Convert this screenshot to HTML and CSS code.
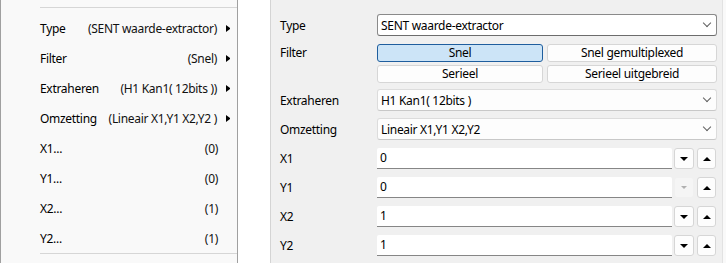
FILE: index.html
```html
<!DOCTYPE html>
<html lang="nl">
<head>
    <meta charset="UTF-8">
    <title>SENT waarde-extractor</title>
    <link rel="stylesheet" href="styles.css">
</head>
<body>
    <div class="menu-panel">
        <div class="menu-sep"></div>
        <div class="menu-row"><span class="menu-label">Type</span><span class="menu-value">(SENT waarde-extractor)</span><span class="menu-arrow"></span></div>
        <div class="menu-row"><span class="menu-label">Filter</span><span class="menu-value">(Snel)</span><span class="menu-arrow"></span></div>
        <div class="menu-row"><span class="menu-label">Extraheren</span><span class="menu-value">(H1 Kan1( 12bits ))</span><span class="menu-arrow"></span></div>
        <div class="menu-row"><span class="menu-label">Omzetting</span><span class="menu-value">(Lineair X1,Y1 X2,Y2 )</span><span class="menu-arrow"></span></div>
        <div class="menu-row"><span class="menu-label">X1...</span><span class="menu-value">(0)</span><span class="menu-noarrow"></span></div>
        <div class="menu-row"><span class="menu-label">Y1...</span><span class="menu-value">(0)</span><span class="menu-noarrow"></span></div>
        <div class="menu-row"><span class="menu-label">X2...</span><span class="menu-value">(1)</span><span class="menu-noarrow"></span></div>
        <div class="menu-row"><span class="menu-label">Y2...</span><span class="menu-value">(1)</span><span class="menu-noarrow"></span></div>
        <div class="menu-sep"></div>
    </div>

    <div class="gutter"></div>

    <div class="form-panel">
        <div class="form-row row-type">
            <span class="form-label">Type</span>
            <div class="combo combo-main"><span>SENT waarde-extractor</span><span class="chevron"></span></div>
        </div>
        <div class="form-row row-filter">
            <span class="form-label">Filter</span>
            <div class="filter-grid">
                <button class="filter-btn selected">Snel</button>
                <button class="filter-btn">Snel gemultiplexed</button>
                <button class="filter-btn">Serieel</button>
                <button class="filter-btn">Serieel uitgebreid</button>
            </div>
        </div>
        <div class="form-row row-extract">
            <span class="form-label">Extraheren</span>
            <div class="combo"><span>H1 Kan1( 12bits )</span><span class="chevron"></span></div>
        </div>
        <div class="form-row row-convert">
            <span class="form-label">Omzetting</span>
            <div class="combo"><span>Lineair X1,Y1 X2,Y2</span><span class="chevron"></span></div>
        </div>
        <div class="form-row row-num">
            <span class="form-label">X1</span>
            <div class="spin"><div class="num-input">0</div><button class="spin-btn"><span class="tri-down"></span></button><button class="spin-btn"><span class="tri-up"></span></button></div>
        </div>
        <div class="form-row row-num">
            <span class="form-label">Y1</span>
            <div class="spin"><div class="num-input">0</div><button class="spin-btn disabled"><span class="tri-down"></span></button><button class="spin-btn"><span class="tri-up"></span></button></div>
        </div>
        <div class="form-row row-num">
            <span class="form-label">X2</span>
            <div class="spin"><div class="num-input">1</div><button class="spin-btn"><span class="tri-down"></span></button><button class="spin-btn"><span class="tri-up"></span></button></div>
        </div>
        <div class="form-row row-num">
            <span class="form-label">Y2</span>
            <div class="spin"><div class="num-input">1</div><button class="spin-btn"><span class="tri-down"></span></button><button class="spin-btn"><span class="tri-up"></span></button></div>
        </div>
    </div>

    <div class="edge"></div>
</body>
</html>
```

FILE: styles.css
```css
body {
    margin: 0;
    padding: 0;
    font-family: "Noto Sans", "Open Sans", sans-serif;
    font-size: 12px;
    letter-spacing: -0.3px;
    color: #000;
    background-color: #ffffff;
    height: 263px;
    display: flex;
    overflow: hidden;
}

/* linker menu */
.menu-panel {
    width: 238px;
    box-sizing: border-box;
    background-color: #f9f9f9;
    border-left: 1px solid #a0a0a0;
    border-right: 1px solid #a0a0a0;
    padding-top: 7px;
    padding-left: 39px;
}

.menu-sep {
    height: 1px;
    background-color: #d6d6d6;
}

.menu-sep:first-child {
    margin-bottom: 5px;
}

.menu-row {
    height: 30px;
    display: flex;
    align-items: center;
}

.menu-label {
    flex: 1;
}

.menu-value {
    color: #111;
}

.menu-arrow,
.menu-noarrow {
    width: 13px;
    height: 7px;
    display: flex;
    justify-content: flex-end;
    padding-right: 7px;
}

.menu-arrow::after {
    content: "";
    border-left: 4px solid #000;
    border-top: 3.5px solid transparent;
    border-bottom: 3.5px solid transparent;
}

.menu-noarrow {
    width: 12px;
}

/* witte ruimte tussen panelen */
.gutter {
    width: 32px;
}

/* rechter formulier */
.form-panel {
    width: 453px;
    box-sizing: border-box;
    background-color: #f0f0f0;
    border-left: 1px solid #d4d4d4;
    border-right: 1px solid #e2e2e2;
    padding: 0 5px 0 9px;
}

.edge {
    flex: 1;
    background-color: #f9f9f9;
}

.form-row {
    display: flex;
    align-items: center;
}

.form-label {
    width: 97px;
    flex-shrink: 0;
}

.row-type { margin-top: 14px; }
.row-filter { margin-top: 8px; align-items: flex-start; }
.row-filter .form-label { line-height: 18px; }
.row-extract { margin-top: 6px; }
.row-convert { margin-top: 7px; }
.row-num { margin-top: 8px; }

.combo {
    flex: 1;
    height: 22px;
    box-sizing: border-box;
    background-color: #fdfdfd;
    border: 1px solid #dcdcdc;
    border-bottom-color: #c8c8c8;
    border-radius: 3px;
    display: flex;
    align-items: center;
    justify-content: space-between;
    padding: 0 6px 0 3px;
}

.combo-main {
    background-color: #fff;
    border-color: #8a8a8a;
    border-bottom-color: #6c6c6c;
}

.chevron {
    width: 5px;
    height: 5px;
    border-right: 1px solid #606060;
    border-bottom: 1px solid #606060;
    transform: translateY(-2px) rotate(45deg);
}

.filter-grid {
    flex: 1;
    display: grid;
    grid-template-columns: 166px 1fr;
    gap: 3px 4px;
}

.filter-btn {
    height: 18px;
    margin: 0;
    padding: 0;
    font-family: inherit;
    font-size: 12px;
    letter-spacing: inherit;
    color: #000;
    background-color: #fdfdfd;
    border: 1px solid #d6d6d6;
    border-radius: 3px;
    line-height: 16px;
}

.filter-btn.selected {
    background-color: #cce4f7;
    border-color: #1f5e9e;
}

.spin {
    flex: 1;
    display: flex;
    gap: 3px;
    padding-right: 1px;
    height: 21px;
}

.num-input {
    flex: 1;
    box-sizing: border-box;
    background-color: #fff;
    border-bottom: 1px solid #868686;
    border-radius: 2px 2px 0 0;
    padding-left: 3px;
    line-height: 20px;
    margin-right: -1px;
}

.spin-btn {
    width: 20px;
    margin: 0;
    padding: 0;
    background-color: #fdfdfd;
    border: 1px solid #d6d6d6;
    border-radius: 3px;
    display: flex;
    align-items: center;
    justify-content: center;
}

.spin-btn + .spin-btn {
    width: 19px;
}

.tri-down {
    border-top: 4px solid #000;
    border-left: 4px solid transparent;
    border-right: 4px solid transparent;
}

.tri-up {
    border-bottom: 4px solid #000;
    border-left: 4px solid transparent;
    border-right: 4px solid transparent;
}

.spin-btn.disabled {
    background-color: #f5f5f5;
    border-color: #f0f0f0;
}

.spin-btn.disabled .tri-down {
    border-top-color: #b0b0b0;
    border-left-width: 3px;
    border-right-width: 3px;
    border-top-width: 3px;
}
```
